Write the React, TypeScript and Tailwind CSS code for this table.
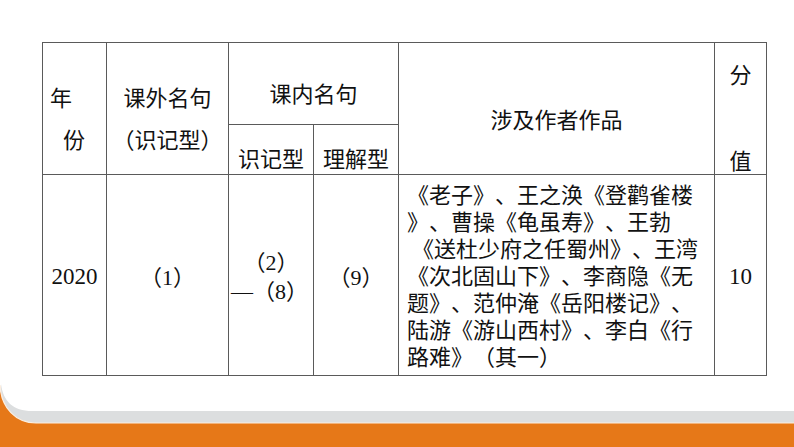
const sans = "font-['Noto_Sans_CJK_SC','Noto_Sans',sans-serif]";
const serif = "font-['Liberation_Serif','Noto_Sans_CJK_SC',serif]";

const works = [
  "《老子》、王之涣《登鹳雀楼",
  "》、曹操《龟虽寿》、王勃",
  "《送杜少府之任蜀州》、王湾",
  "《次北固山下》、李商隐《无",
  "题》、范仲淹《岳阳楼记》、",
  "陆游《游山西村》、李白《行",
  "路难》（其一）",
];

function Footer() {
  return (
    <svg
      className="absolute left-0 bottom-0"
      width="794"
      height="64"
      viewBox="0 383 794 64"
    >
      <path d="M1 384 C3 401 13 411 32 411 L794 411 L794 423 L0 423 Z" fill="#dcdedf" />
      <path d="M0 385 C1 408 16 423 36 423 L794 423 L794 447 L0 447 Z" fill="#e67818" />
      <path d="M0 385 C1 408 16 423 36 423 L794 423" fill="none" stroke="#fbeee0" strokeWidth="1.2" />
    </svg>
  );
}

export default function App() {
  const cell = "border border-[#5a5a5a] p-0";
  return (
    <div className="relative w-[794px] h-[447px] bg-white overflow-hidden [text-spacing-trim:space-all]">
      <div className="pt-[42px] pl-[42px]">
        <table className="w-[725px] border-collapse table-fixed border border-[#333] text-[#111]">
          <colgroup>
            <col className="w-[64px]" />
            <col className="w-[122px]" />
            <col className="w-[85px]" />
            <col className="w-[85px]" />
            <col className="w-[316px]" />
            <col className="w-[52px]" />
          </colgroup>
          <tbody>
            <tr className="h-[81px]">
              <td rowSpan={2} className={`${cell} w-[64px] align-top ${sans} text-[22px] leading-[42px]`}>
                <div className="pt-[32px]">
                  <div className="pl-[7px]">年</div>
                  <div className="pl-[20px]">份</div>
                </div>
              </td>
              <td rowSpan={2} className={`${cell} w-[122px] align-top ${sans} text-[22px] leading-[42px] text-center`}>
                <div className="pt-[32px]">
                  <div>课外名句</div>
                  <div>（识记型）</div>
                </div>
              </td>
              <td colSpan={2} className={`${cell} w-[170px] align-top ${sans} text-[22px] leading-[30px] text-center`}>
                <div className="pt-[34px]">课内名句</div>
              </td>
              <td rowSpan={2} className={`${cell} w-[316px] align-middle ${sans} text-[22px] leading-[30px] text-center`}>
                <div className="pt-[19px]">涉及作者作品</div>
              </td>
              <td rowSpan={2} className={`${cell} w-[52px] align-top ${sans} text-[22px] leading-[28px]`}>
                <div className="h-[131px] flex flex-col items-center justify-between pt-[16px] pb-[1px]">
                  <div>分</div>
                  <div>值</div>
                </div>
              </td>
            </tr>
            <tr className="h-[50px]">
              <td className={`${cell} align-bottom ${sans} text-[22px] leading-[30px] text-center`}>
                <div className="pb-[2px]">识记型</div>
              </td>
              <td className={`${cell} align-bottom ${sans} text-[22px] leading-[30px] text-center`}>
                <div className="pb-[2px]">理解型</div>
              </td>
            </tr>
            <tr className="h-[201px]">
              <td className={`${cell} align-middle text-center ${serif} text-[23px]`}>
                <div className="pt-[4px]">2020</div>
              </td>
              <td className={`${cell} align-middle text-center ${serif} text-[22px]`}>
                <div className="pt-[4px]">（1）</div>
              </td>
              <td className={`${cell} align-middle text-center ${serif} text-[22px] leading-[29px]`}>
                <div className="pt-[4px]">
                  <div>（2）</div>
                  <div className="whitespace-nowrap -ml-[3px]">—（8）</div>
                </div>
              </td>
              <td className={`${cell} align-middle text-center ${serif} text-[22px]`}>
                <div className="pt-[4px]">（9）</div>
              </td>
              <td className={`${cell} align-middle ${serif} text-[22px] leading-[27px]`}>
                <div className="pl-[8px] pt-[2px]">
                  {works.map((line, i) => (
                    <div key={i} className={`whitespace-nowrap ${i === 2 ? "pl-[5px]" : ""}`}>
                      {line}
                    </div>
                  ))}
                </div>
              </td>
              <td className={`${cell} align-middle text-center ${serif} text-[23px]`}>
                <div className="pt-[4px]">10</div>
              </td>
            </tr>
          </tbody>
        </table>
      </div>
      <Footer />
    </div>
  );
}
